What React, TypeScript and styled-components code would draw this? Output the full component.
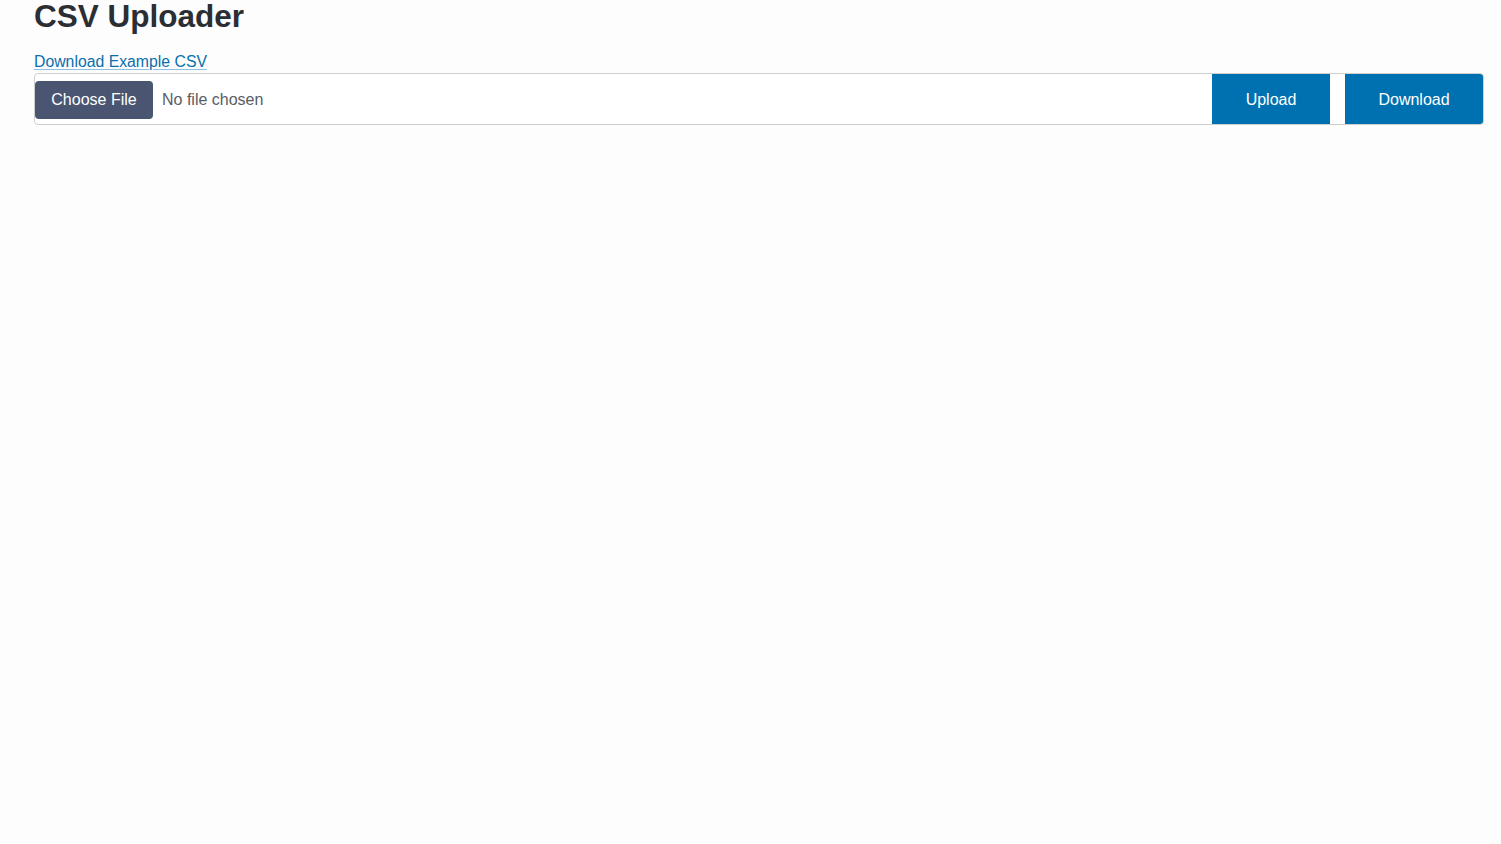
import React from "react";
import styled, { createGlobalStyle } from "styled-components";

const Global = createGlobalStyle`
  html, body { margin: 0; padding: 0; background: #fdfdfd; }
  body { font-family: "Liberation Sans", Arial, Helvetica, sans-serif; color: #2b2e33; }
  * { box-sizing: border-box; }
`;

const Page = styled.main`
  padding: 0 17px 0 34px;
  min-height: 844px;
`;

const Title = styled.h1`
  margin: 0 0 17px;
  font-size: 31.5px;
  line-height: 33px;
  font-weight: 700;
  color: #2b2e33;
`;

const ExampleLink = styled.a`
  display: block;
  width: max-content;
  font-size: 15.8px;
  line-height: 23px;
  color: #0a6fad;
  text-decoration: underline;
  text-decoration-color: #8cc0e0;
  text-underline-offset: 2px;
`;

const Group = styled.div`
  display: flex;
  align-items: stretch;
  height: 52px;
  border: 1px solid #cfcfcf;
  border-radius: 4px;
  background: #ffffff;
`;

const FileField = styled.label`
  flex: 1;
  display: flex;
  align-items: center;
  gap: 9px;
  cursor: pointer;
  input { display: none; }
`;

const ChooseButton = styled.span`
  display: inline-flex;
  align-items: center;
  justify-content: center;
  width: 118px;
  height: 38px;
  margin-top: 1px;
  padding-top: 1px;
  background: #4a5572;
  color: #ffffff;
  border-radius: 4px;
  font-size: 16px;
`;

const FileName = styled.span`
  font-size: 16px;
  color: #595d63;
  padding-top: 2px;
`;

const ActionButton = styled.button<{ $width: number; $last?: boolean }>`
  width: ${(p) => p.$width}px;
  margin-left: ${(p) => (p.$last ? 15 : 0)}px;
  padding: 2px 0 0;
  border: none;
  background: #0071b0;
  color: #ffffff;
  font-family: "Liberation Sans", Arial, Helvetica, sans-serif;
  font-size: 16px;
  border-radius: ${(p) => (p.$last ? "0 3px 3px 0" : "0")};
  cursor: pointer;
`;

export default function App() {
  return (
    <>
      <Global />
      <Page>
        <Title>CSV Uploader</Title>
        <ExampleLink href="#">Download Example CSV</ExampleLink>
        <Group>
          <FileField>
            <input type="file" accept=".csv" />
            <ChooseButton>Choose File</ChooseButton>
            <FileName>No file chosen</FileName>
          </FileField>
          <ActionButton $width={118}>Upload</ActionButton>
          <ActionButton $width={138} $last>Download</ActionButton>
        </Group>
      </Page>
    </>
  );
}
